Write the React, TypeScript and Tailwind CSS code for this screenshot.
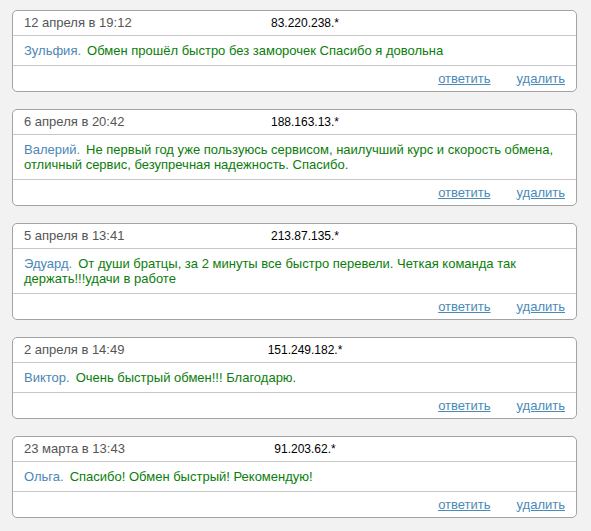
const REVIEWS = [
  {
    date: "12 апреля в 19:12",
    ip: "83.220.238.*",
    name: "Зульфия.",
    text: "Обмен прошёл быстро без заморочек Спасибо я довольна",
  },
  {
    date: "6 апреля в 20:42",
    ip: "188.163.13.*",
    name: "Валерий.",
    text: "Не первый год уже пользуюсь сервисом, наилучший курс и скорость обмена, отличный сервис, безупречная надежность. Спасибо.",
  },
  {
    date: "5 апреля в 13:41",
    ip: "213.87.135.*",
    name: "Эдуард.",
    text: "От души братцы, за 2 минуты все быстро перевели. Четкая команда так держать!!!удачи в работе",
  },
  {
    date: "2 апреля в 14:49",
    ip: "151.249.182.*",
    name: "Виктор.",
    text: "Очень быстрый обмен!!! Благодарю.",
  },
  {
    date: "23 марта в 13:43",
    ip: "91.203.62.*",
    name: "Ольга.",
    text: "Спасибо! Обмен быстрый! Рекомендую!",
  },
];

function ReviewCard({ date, ip, name, text }: (typeof REVIEWS)[number]) {
  return (
    <div className="rounded-[5px] border border-[#a3a3a3] bg-white">
      <div className="flex h-[25px] items-center border-b border-[#c8c8c8] pl-[11px] text-[13px]">
        <span className="w-[200px] shrink-0 text-[#555]">{date}</span>
        <span className="w-[162px] shrink-0 text-center text-[12px] text-black">{ip}</span>
      </div>
      <div className="border-b border-[#c8c8c8] px-[11px] py-[7px] text-[13px] leading-[15px]">
        <span className="text-[#4a86b8]">{name}</span>
        <span className="ml-[6px] text-[#0a7d0a]">{text}</span>
      </div>
      <div className="flex h-[25px] items-center justify-end gap-[26px] pr-[11px] text-[13px]">
        <a href="#" className="text-[#4a8ab8] underline">
          ответить
        </a>
        <a href="#" className="text-[#4a8ab8] underline">
          удалить
        </a>
      </div>
    </div>
  );
}

export default function App() {
  return (
    <div className="min-h-[531px] bg-[#f2f2f2] px-[12px] py-[10px] font-['Liberation_Sans',Arial,sans-serif]">
      <div className="flex w-[565px] flex-col gap-[17px]">
        {REVIEWS.map((r) => (
          <ReviewCard key={r.ip} {...r} />
        ))}
      </div>
    </div>
  );
}
